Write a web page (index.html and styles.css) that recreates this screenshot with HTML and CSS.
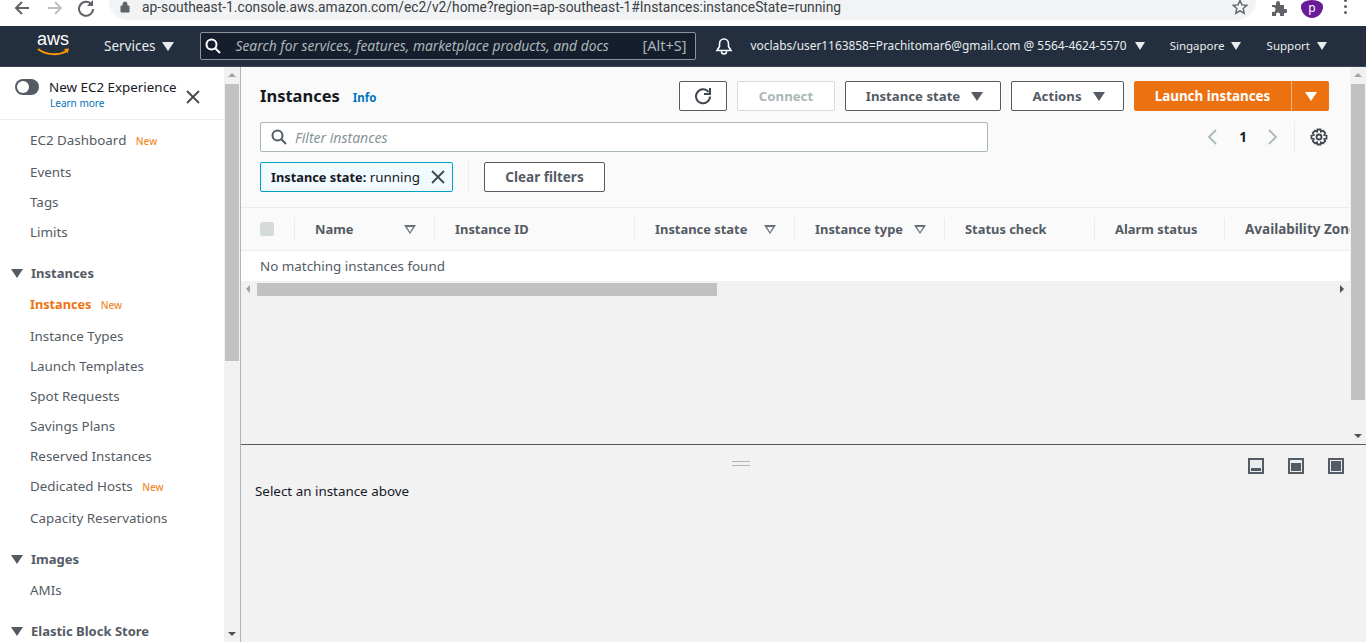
FILE: index.html
```html
<!DOCTYPE html>
<html>
<head>
    <title>Instances | EC2 Management Console</title>
    <link rel="stylesheet" href="styles.css">
</head>
<body>
    <!-- browser bar -->
    <div class="chrome">
        <svg class="ch-btn back" width="18" height="18" viewBox="0 0 18 18"><path d="M16 9H3M9 3L3 9l6 6" fill="none" stroke="#5f6368" stroke-width="2"/></svg>
        <svg class="ch-btn forward" width="18" height="18" viewBox="0 0 18 18"><path d="M2 9h13M9 3l6 6-6 6" fill="none" stroke="#bdc1c6" stroke-width="2"/></svg>
        <svg class="ch-btn reload" width="18" height="18" viewBox="0 0 18 18"><path d="M14.500 5.500A7 7 0 1 0 16 10" fill="none" stroke="#5f6368" stroke-width="2"/><path d="M16 1v6h-6z" fill="#5f6368"/></svg>
        <div class="pill">
            <svg width="10" height="12" viewBox="0 0 10 12"><path d="M1 5h8v6H1zM3 5V3a2 2 0 0 1 4 0v2" fill="#5f6368" stroke="#5f6368"/></svg>
            <span class="url">ap-southeast-1.console.aws.amazon.com/ec2/v2/home?region=ap-southeast-1#Instances:instanceState=running</span>
            <svg class="star" width="16" height="16" viewBox="0 0 16 16"><path d="M8 1.500l2 4.400 4.700.5-3.500 3.200 1 4.700L8 11.900l-4.200 2.400 1-4.700-3.500-3.200L6 5.900z" fill="none" stroke="#5f6368" stroke-width="1.400"/></svg>
        </div>
        <svg class="puzzle" width="16" height="16" viewBox="0 0 16 16"><path d="M1 5h4V3a2 2 0 0 1 4 0v2h4v4h1.500a2 2 0 0 1 0 4H13v3H9v-1.500a2 2 0 0 0-4 0V16H1v-4h1a2.500 2.500 0 0 0 0-5H1z" fill="#5f6368"/></svg>
        <div class="avatar">p</div>
        <div class="dots"><i></i><i></i><i></i></div>
    </div>

    <!-- console nav -->
    <div class="nav">
        <div class="logo">
            <span>aws</span>
            <svg width="33" height="9" viewBox="0 0 33 9"><path d="M1 1c8 6 20 7 29 2" fill="none" stroke="#f90" stroke-width="2"/><path d="M27 1l5-.5-1.500 5z" fill="#f90"/></svg>
        </div>
        <span class="nav-link services">Services</span><i class="caret white"></i>
        <div class="nav-search">
            <svg width="16" height="16" viewBox="0 0 16 16"><circle cx="6.500" cy="6.500" r="5" fill="none" stroke="#fff" stroke-width="2"/><path d="M10 10l5 5" stroke="#fff" stroke-width="2"/></svg>
            <span class="nav-ph">Search for services, features, marketplace products, and docs</span>
            <span class="nav-key">[Alt+S]</span>
        </div>
        <svg class="bell" width="18" height="18" viewBox="0 0 18 18"><path d="M9 2c-3 0-4.500 2.500-4.500 5v2.500L2 13.500h14L13.500 9.500V7C13.500 4.500 12 2 9 2zM6.500 14.500a2.500 2.500 0 0 0 5 0" fill="none" stroke="#fff" stroke-width="1.600"/></svg>
        <span class="nav-link user">voclabs/user1163858=Prachitomar6@gmail.com @ 5564-4624-5570</span><i class="caret white small"></i>
        <span class="nav-link region">Singapore</span><i class="caret white small"></i>
        <span class="nav-link support">Support</span><i class="caret white small"></i>
    </div>

    <div class="layout">
        <!-- left menu -->
        <div class="side">
            <div class="side-top">
                <div class="toggle"><i></i></div>
                <div class="exp">
                    <div class="exp-title">New EC2 Experience</div>
                    <div class="exp-link">Learn more</div>
                </div>
                <svg class="exp-x" width="16" height="16" viewBox="0 0 16 16"><path d="M2 2l12 12M14 2L2 14" stroke="#414750" stroke-width="1.800"/></svg>
            </div>
            <ul class="menu">
                <li class="tall">EC2 Dashboard <b>New</b></li>
                <li>Events</li>
                <li>Tags</li>
                <li>Limits</li>
                <li class="group"><i class="caret"></i>Instances</li>
                <li class="tall active">Instances <b>New</b></li>
                <li>Instance Types</li>
                <li>Launch Templates</li>
                <li>Spot Requests</li>
                <li>Savings Plans</li>
                <li>Reserved Instances</li>
                <li class="tall short">Dedicated Hosts <b>New</b></li>
                <li>Capacity Reservations</li>
                <li class="group"><i class="caret"></i>Images</li>
                <li class="ami">AMIs</li>
                <li class="group"><i class="caret"></i>Elastic Block Store</li>
            </ul>
        </div>
        <div class="vbar side-bar">
            <i class="arrow up"></i>
            <div class="thumb"></div>
            <i class="arrow down"></i>
        </div>

        <!-- main area -->
        <div class="main">
            <div class="upper">
                <div class="panel">
                    <div class="head">
                        <h1>Instances</h1>
                        <a class="info">Info</a>
                        <div class="actions">
                            <button class="btn refresh"><svg width="18" height="18" viewBox="0 0 18 18"><path d="M14.500 5A7 7 0 1 0 16 9.500" fill="none" stroke="#414750" stroke-width="2"/><path d="M16 1v6h-6" fill="none" stroke="#414750" stroke-width="2"/></svg></button>
                            <button class="btn connect">Connect</button>
                            <button class="btn state">Instance state <i class="caret"></i></button>
                            <button class="btn act">Actions <i class="caret"></i></button>
                            <div class="launch">
                                <span class="launch-main">Launch instances</span>
                                <span class="launch-more"><i class="caret white"></i></span>
                            </div>
                        </div>
                    </div>
                    <div class="filter-row">
                        <div class="filter">
                            <svg width="16" height="16" viewBox="0 0 16 16"><circle cx="6.500" cy="6.500" r="5" fill="none" stroke="#545b64" stroke-width="2"/><path d="M10 10l5 5" stroke="#545b64" stroke-width="2"/></svg>
                            <span>Filter instances</span>
                        </div>
                        <div class="pager">
                            <svg width="12" height="18" viewBox="0 0 12 18"><path d="M10 2L3 9l7 7" fill="none" stroke="#aab7b8" stroke-width="1.800"/></svg>
                            <span>1</span>
                            <svg width="12" height="18" viewBox="0 0 12 18"><path d="M2 2l7 7-7 7" fill="none" stroke="#aab7b8" stroke-width="1.800"/></svg>
                            <div class="pager-sep"></div>
                            <svg width="18" height="18" viewBox="0 0 18 18"><circle cx="9" cy="9" r="2.500" fill="none" stroke="#414750" stroke-width="1.800"/><path d="M7.500 1.500h3l.5 2.200 2-1 2.200 2.200-1 2 2.300.6v3l-2.300.6 1 2-2.200 2.200-2-1-.5 2.200h-3l-.5-2.200-2 1-2.200-2.200 1-2-2.300-.6v-3l2.300-.6-1-2L5 2.700l2 1z" fill="none" stroke="#414750" stroke-width="1.800"/></svg>
                        </div>
                    </div>
                    <div class="chips">
                        <div class="chip">
                            <span><b>Instance state:</b> running</span>
                            <svg width="14" height="14" viewBox="0 0 14 14"><path d="M1 1l12 12M13 1L1 13" stroke="#414750" stroke-width="1.800"/></svg>
                        </div>
                        <div class="chip-sep"></div>
                        <button class="btn clear">Clear filters</button>
                    </div>
                    <div class="table">
                        <div class="thead">
                            <div class="th c0"><i class="check"></i></div>
                            <div class="th c1"><span>Name</span><i class="sort"></i></div>
                            <div class="th c2"><span>Instance ID</span></div>
                            <div class="th c3"><span>Instance state</span><i class="sort"></i></div>
                            <div class="th c4"><span>Instance type</span><i class="sort"></i></div>
                            <div class="th c5"><span>Status check</span></div>
                            <div class="th c6"><span>Alarm status</span></div>
                            <div class="th c7"><span>Availability Zone</span></div>
                        </div>
                        <div class="empty">No matching instances found</div>
                        <div class="hbar">
                            <i class="arrow left"></i>
                            <div class="hthumb"></div>
                            <i class="arrow right"></i>
                        </div>
                    </div>
                </div>
                <div class="vbar main-bar">
                    <i class="arrow up"></i>
                    <div class="thumb"></div>
                    <i class="arrow down"></i>
                </div>
            </div>
            <div class="lower">
                <div class="lower-top">
                    <div class="handle"></div>
                    <div class="views">
                        <span class="view v1"><i></i></span>
                        <span class="view v2"><i></i></span>
                        <span class="view v3"><i></i></span>
                    </div>
                </div>
                <p class="select">Select an instance above</p>
            </div>
        </div>
    </div>
</body>
</html>
```

FILE: styles.css
```css
*{margin: 0; padding: 0; box-sizing: border-box;}
html,body{height: 642px; overflow: hidden;}
body{font-family: "Noto Sans", "Open Sans", sans-serif; font-size: 13.400px; color: #545b64; background: #fff;}
ul{list-style: none;}
i{font-style: normal; display: block;}
button{font-family: inherit;}

/* browser bar */
.chrome{height: 26px; display: flex; align-items: center; background: #fff; overflow: hidden;}
.ch-btn{flex: none; margin-top: -10px;}
.back{margin-left: 13px;}
.forward{margin-left: 15px;}
.reload{margin-left: 13px;}
.pill{width: 1147px; margin-left: 14px; height: 38px; align-self: flex-start; margin-top: -18px; padding: 12px 8px 0 11px; background: #f1f3f4;
    border-radius: 19px; display: flex; align-items: center; flex: none;}
.url{font-size: 13.800px; color: #3c4043; margin-left: 12px; white-space: nowrap; font-family: "Roboto", sans-serif;}
.star{margin-left: auto;}
.puzzle{margin-left: 15px; margin-top: -10px; flex: none;}
.avatar{width: 22px; height: 18px; align-self: flex-start; border-radius: 50% 50% 50% 50% / 35% 35% 65% 65%; background: #6a1b9a; color: #fff; font-size: 12px; text-align: center;
    line-height: 15px; margin-left: 14px; flex: none;}
.dots{margin-left: 21px; margin-top: -10px; flex: none;}
.dots i{width: 3px; height: 3px; border-radius: 50%; background: #5f6368; margin-bottom: 3px;}

/* console nav */
.nav{height: 41px; background: #232f3e; display: flex; align-items: center; color: #eaeded; border-bottom: 1px solid #3b4654;}
.logo{width: 33px; margin-left: 37px; color: #fff; line-height: 14px;}
.logo span{display: block; font-family: "Liberation Sans", sans-serif; font-size: 18px; height: 16px; margin-top: -4px;}
.logo svg{display: block;}
.nav-link{white-space: nowrap; margin-bottom: 2px;}
.services{margin-left: 34px; font-size: 13.500px; margin-bottom: 0;}
.caret{width: 0; height: 0; border-left: 6px solid transparent; border-right: 6px solid transparent; border-top: 9px solid #545b64;}
.caret.white{border-top-color: #eaeded;}
.caret.small{border-left-width: 5px; border-right-width: 5px; border-top-width: 8px;}
.services + .caret{margin-left: 6px;}
.nav-search{width: 496px; height: 28px; margin-left: 26px; background: #161e2d; border: 1px solid #8d9499; border-radius: 2px;
    display: flex; align-items: center; padding: 0 8px 0 0;}
.nav-search svg{margin-left: 4px; flex: none;}
.nav-ph{font-style: italic; color: #aab7b8; margin: 0 0 2px 15px; font-size: 13.800px; white-space: nowrap;}
.nav-key{margin: 0 0 2px auto; color: #aab7b8; font-size: 14.500px;}
.bell{margin-left: 19px; flex: none;}
.user{font-size: 11.900px; margin-left: 18px;}
.user + .caret{margin-left: 8px;}
.region{font-size: 11.500px; margin-left: 25px;}
.region + .caret{margin-left: 6px;}
.support{font-size: 11.500px; margin-left: 26px;}
.support + .caret{margin-left: 7px;}

.layout{display: flex; height: 575px;}

/* left menu */
.side{width: 224px; background: #fff; flex: none; overflow: hidden;}
.side-top{height: 53px; display: flex; border-bottom: 1px solid #eaeded; padding: 12px 0 0 15px;}
.toggle{width: 24px; height: 16px; border-radius: 8px; background: #545b64;}
.toggle i{width: 12px; height: 12px; border-radius: 50%; background: #fff; margin: 2px 0 0 2px;}
.exp{margin-left: 10px;}
.exp-title{line-height: 16px; color: #16191f;}
.exp-link{font-size: 10px; color: #0073bb; line-height: 16px; margin: 0 0 0 1px;}
.exp-x{margin: 10px 0 0 8px;}
.menu{padding-top: 4px;}
.menu li{height: 30px; line-height: 30px; padding-left: 30px; color: #545b64; white-space: nowrap;}
.menu li.tall{height: 33px; line-height: 32px;}
.menu li.short{height: 32px; line-height: 30px;}
.menu li.ami{margin-top: 1px;}
.menu b{color: #f08a2e; font-size: 10px; margin-left: 6px; font-weight: 500;}
.menu li.active{color: #ec7211; font-weight: 700; font-size: 12.700px;}
.menu li.group{font-weight: 700; font-size: 13px; margin-top: 11px; display: flex; align-items: center;}
.menu li.group .caret{margin: 0 8px 0 -19px;}

/* scrollbars */
.vbar{width: 16px; background: #f1f1f1; flex: none; position: relative; padding: 17px 1px 0;}
.thumb{background: #c1c1c1;}
.side-bar{height: 575px;}
.side-bar .thumb{height: 277px;}
.main-bar{height: 377px;}
.main-bar .thumb{height: 316px;}
.arrow{width: 0; height: 0; position: absolute; border: 4px solid transparent;}
.arrow.up{border-bottom-color: #a3a3a3; border-top-width: 0; top: 6px; left: 4px;}
.arrow.down{border-top-color: #505050; border-bottom-width: 0; bottom: 6px; left: 4px;}
.arrow.left{border-right-color: #a3a3a3; border-left-width: 0; left: 5px; top: 4px;}
.arrow.right{border-left-color: #505050; border-right-width: 0; right: 6px; top: 4px;}

/* main area */
.main{flex: 1; border-left: 1px solid #b0b5b8; display: flex; flex-direction: column; min-width: 0;}
.upper{height: 378px; display: flex; border-bottom: 1px solid #545b64; flex: none;}
.panel{flex: 1; min-width: 0; background: #f2f2f3; overflow: hidden;}
.head{height: 44px; background: #fafafa; display: flex; align-items: center; padding: 14px 21px 0 19px;}
h1{font-size: 16.500px; font-weight: 700; color: #16191f; line-height: 30px;}
.info{color: #0073bb; font-size: 11.500px; font-weight: 700; margin: 3px 0 0 13px;}
.actions{margin-left: auto; display: flex; gap: 10px;}
.btn{height: 30px; border: 1px solid #545b64; background: #fff; border-radius: 2px; color: #545b64; font-size: 13.200px; font-weight: 700;
    display: flex; align-items: center; justify-content: center; white-space: nowrap;}
.refresh{width: 48px;}
.connect{width: 98px; border-color: #d5dbdb; color: #aab7b8;}
.state{width: 156px; gap: 11px; padding-left: 3px;}
.act{width: 113px; gap: 11px; padding-left: 2px;}
.launch{width: 195px; height: 30px; display: flex; background: #ec7211; border-radius: 2px; color: #fff; font-size: 13.400px; font-weight: 700; line-height: 30px;}
.launch-main{width: 158px; text-align: center; border-right: 1px solid #f5b27c;}
.launch-more{flex: 1; display: flex; align-items: center; justify-content: center;}
.launch-more .caret{border-top-color: #fff;}
.filter-row{height: 41px; background: #fafafa; display: flex; padding: 0 21px 0 19px; align-items: flex-end;}
.filter{width: 728px; height: 30px; background: #fff; border: 1px solid #aab7b8; border-radius: 2px; display: flex; align-items: center;
    padding-left: 10px;}
.filter span{font-style: italic; font-size: 14px; color: #879596; margin-left: 8px;}
.pager{margin-left: auto; height: 30px; display: flex; align-items: center; padding-right: 1px;}
.pager span{color: #16191f; font-weight: 700; margin: 0 20px 0 21px;}
.pager-sep{width: 1px; height: 30px; background: #eaeded; margin: 0 15px;}
.chips{height: 56px; background: #fafafa; display: flex; padding: 10px 0 0 19px; border-bottom: 1px solid #eaeded;}
.chip{width: 193px; height: 30px; background: #f1faff; border: 1px solid #00a1c9; border-radius: 2px; display: flex; align-items: center;
    padding-left: 10px; color: #16191f; white-space: nowrap;}
.chip b{font-size: 12.800px;}
.chip svg{margin-left: 11px;}
.chip-sep{width: 1px; height: 30px; background: #eaeded; margin: 0 15px;}
.clear{width: 121px; font-size: 13.500px;}

/* table */
.table{overflow: hidden;}
.thead{display: flex; height: 43px; background: #fafafa; border-bottom: 1px solid #eaeded; align-items: center;}
.th{display: flex; align-items: center; height: 22px; flex: none; padding-left: 20px; border-left: 1px solid #eaeded; font-size: 12.900px; font-weight: 700; white-space: nowrap;}
.th.c0{width: 53px; border-left: 0; padding-left: 19px;}
.c1{width: 140px;} .c2{width: 200px;} .c3{width: 160px;} .c4{width: 150px;} .c5{width: 150px;} .c6{width: 130px;}
.th.c7{width: 200px; font-size: 13.500px;}
.check{width: 14px; height: 14px; border-radius: 2px; background: #d5dbdb;}
.sort{width: 0; height: 0; margin-left: auto; margin-right: 18px; border-left: 6px solid transparent; border-right: 6px solid transparent;
    border-top: 9px solid #687078; position: relative;}
.sort::after{content: ""; position: absolute; left: -3px; top: -7px; border-left: 3px solid transparent; border-right: 3px solid transparent;
    border-top: 5px solid #fafafa;}
.empty{height: 30px; line-height: 30px; background: #fff; padding-left: 19px; color: #545b64;}
.hbar{height: 16px; background: #f1f1f1; position: relative; padding: 2px 0 0 16px;}
.hthumb{width: 460px; height: 13px; background: #c1c1c1;}

/* lower panel */
.lower{flex: 1; background: #f2f2f3; padding: 0 14px;}
.lower-top{height: 36px; display: flex;}
.handle{width: 18px; height: 5px; border-top: 1px solid #aab7b8; border-bottom: 1px solid #aab7b8; margin: 16px 0 0 477px;}
.views{margin-left: auto; display: flex; gap: 24px; padding: 13px 0 0; margin-right: 8px;}
.view{width: 16px; height: 16px; background: #545b64; padding: 2px; display: block;}
.view i{width: 100%; height: 100%; background: #eaeded; overflow: hidden;}
.view i::after{content: ""; display: block; background: #545b64; margin: 0 1px;}
.v1 i::after{height: 3px; margin-top: 8px;}
.v2 i::after{height: 8px; margin-top: 3px;}
.v3 i::after{height: 10px; margin-top: 1px;}
.select{color: #16191f; line-height: 20px;}
```
